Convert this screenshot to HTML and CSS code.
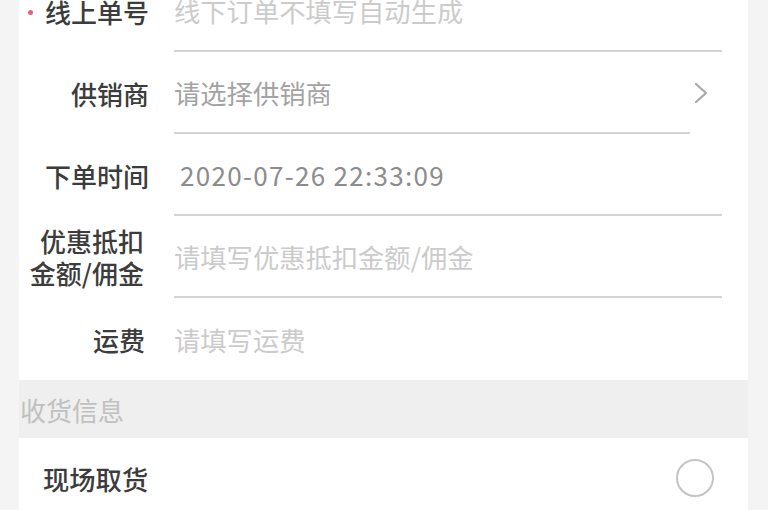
FILE: index.html
```html
<!DOCTYPE html>
<html>
<head>
	<meta charset="utf-8">
	<title>订单信息</title>
	<link rel="stylesheet" href="styles.css">
</head>
<body>

<div class="page">
	<div class="card card-order">
		<div class="row">
			<div class="label"><span class="required"></span>线上单号</div>
			<div class="field"><span class="placeholder">线下订单不填写自动生成</span></div>
		</div>
		<div class="row">
			<div class="label">供销商</div>
			<div class="field field-short"><span class="select">请选择供销商</span></div>
			<div class="chevron">
				<svg width="14" height="22" viewBox="0 0 14 22"><path d="M2 2 L12 11 L2 20" fill="none" stroke="#a8a8a8" stroke-width="2.2" stroke-linecap="round" stroke-linejoin="round"/></svg>
			</div>
		</div>
		<div class="row">
			<div class="label">下单时间</div>
			<div class="field"><span class="value">2020-07-26 22:33:09</span></div>
		</div>
		<div class="row">
			<div class="label label-two">
				<span>优惠抵扣</span>
				<span>金额/佣金</span>
			</div>
			<div class="field"><span class="placeholder">请填写优惠抵扣金额/佣金</span></div>
		</div>
		<div class="row row-last">
			<div class="label label-narrow">运费</div>
			<div class="field field-plain"><span class="placeholder">请填写运费</span></div>
		</div>
	</div>

	<div class="section-title">收货信息</div>

	<div class="card card-delivery">
		<div class="row row-check">
			<div class="check-label">现场取货</div>
			<div class="radio"></div>
		</div>
	</div>
</div>

</body>
</html>
```

FILE: styles.css
```css
html, body {
	margin: 0;
	padding: 0;
	background: #f4f4f4;
	overflow: hidden;
}
body {
	font-family: "Noto Sans CJK SC", "Noto Sans", sans-serif;
	color: #3c3c3c;
}
.page {
	width: 729px;
	margin-left: 19px;
}
.card {
	background: #fff;
}
.card-order {
	margin-top: -30px;
}

.row {
	display: flex;
	height: 82px;
}
.label {
	width: 130px;
	flex-shrink: 0;
	box-sizing: border-box;
	display: flex;
	align-items: center;
	justify-content: flex-end;
	font-size: 26px;
	font-weight: 500;
	text-align: right;
	position: relative;
}
.label-two {
	flex-direction: column;
	align-items: flex-end;
	justify-content: center;
	line-height: 32px;
	padding-right: 5px;
}
.label-narrow {
	padding-right: 4px;
}
.required {
	width: 5px;
	height: 5px;
	border-radius: 50%;
	background: #e2607c;
	position: absolute;
	left: 9px;
	top: 40px;
}
.field {
	flex: 1;
	margin-left: 25px;
	margin-right: 26px;
	border-bottom: 2px solid #d4d4d4;
	display: flex;
	align-items: center;
	font-size: 26.3px;
}
.field-short {
	margin-right: 0;
}
.field-plain {
	border-bottom: none;
}
.placeholder {
	color: #cbcbcb;
}
.select {
	color: #a3a3a3;
}
.value {
	color: #8c8c8c;
	margin-left: 6px;
	letter-spacing: 1.3px;
	font-size: 26px;
}
.chevron {
	width: 58px;
	display: flex;
	align-items: center;
	padding-left: 4px;
	box-sizing: border-box;
}

.section-title {
	height: 58px;
	display: flex;
	align-items: center;
	padding-left: 1px;
	background: #efefef;
	color: #c0c0c0;
	font-size: 26px;
}

.row-check {
	height: 80px;
	align-items: center;
	justify-content: space-between;
	padding: 0 34px 0 24px;
}
.check-label {
	font-size: 26.3px;
	font-weight: 500;
}
.radio {
	width: 34px;
	height: 34px;
	border: 2px solid #c4c4c4;
	border-radius: 50%;
}
```
